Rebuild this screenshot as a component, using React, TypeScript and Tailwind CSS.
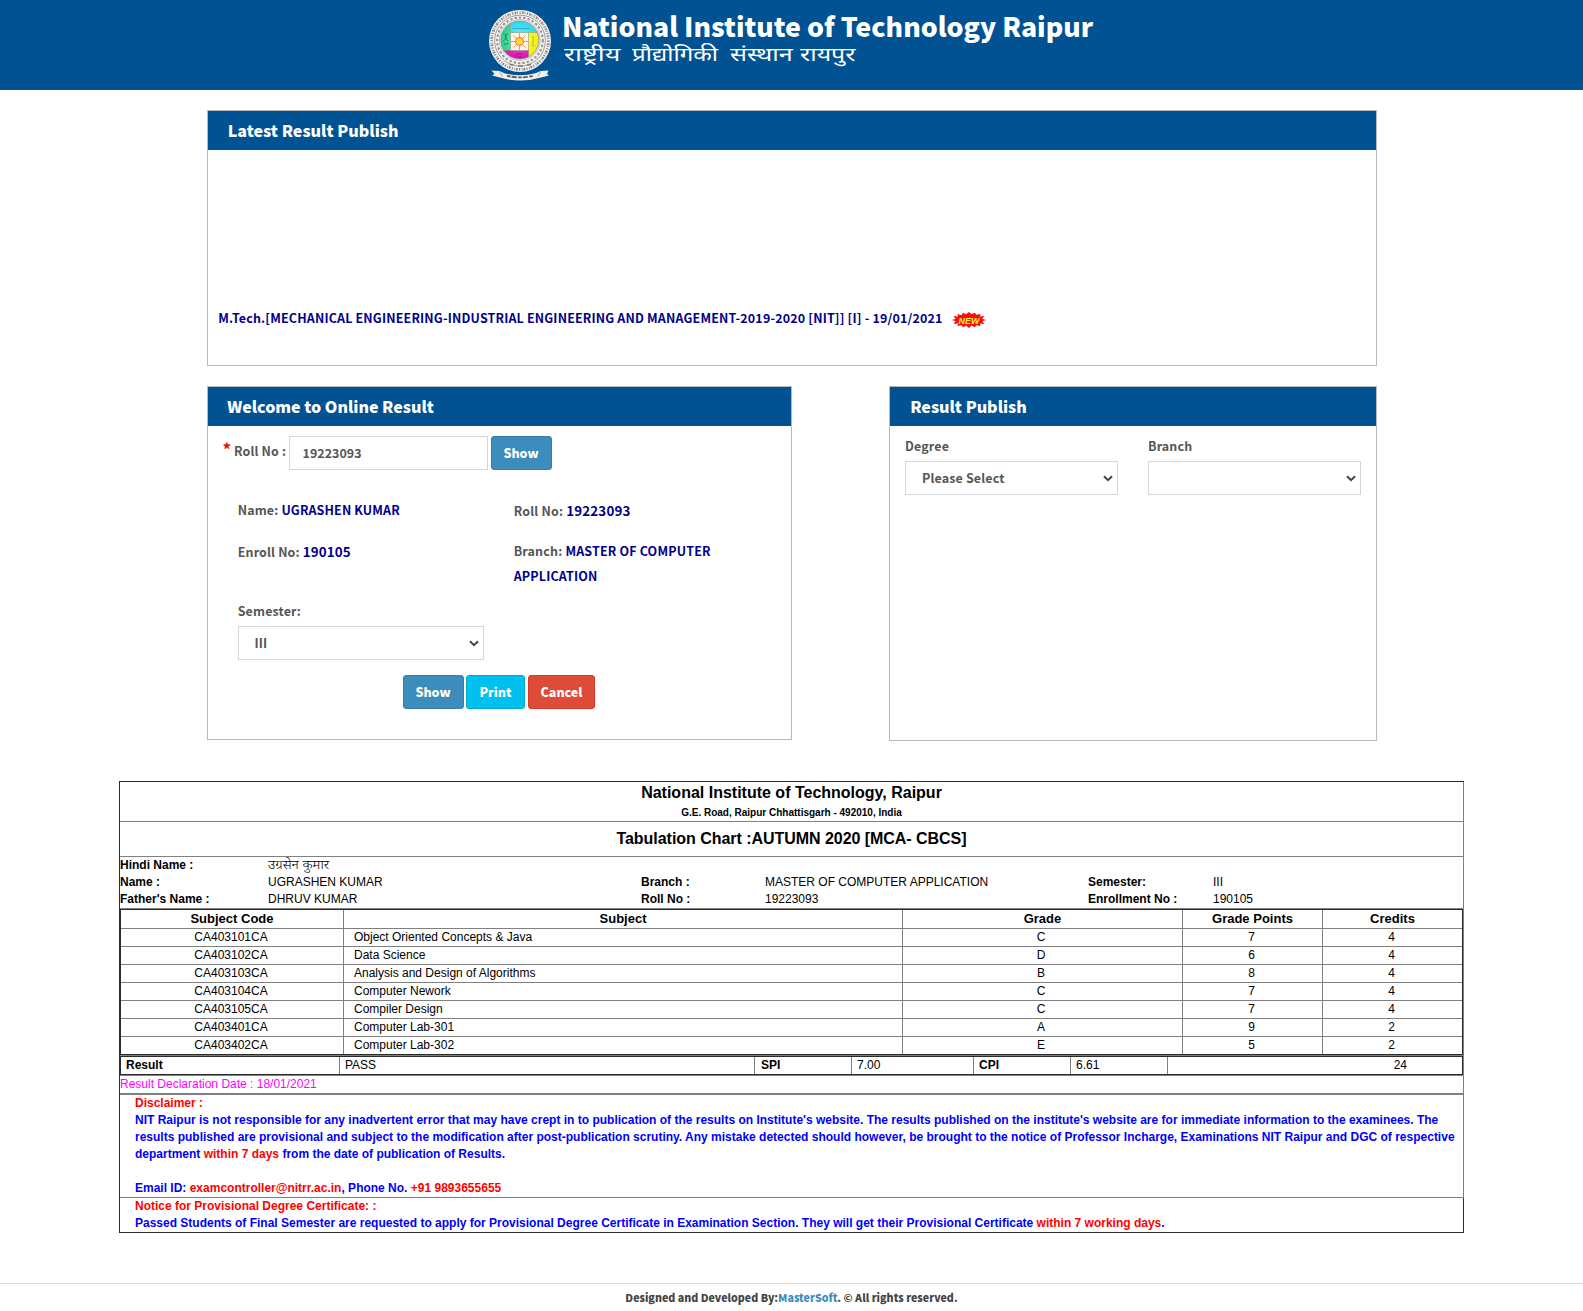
import type { ReactNode } from 'react';

const SOURCE = "font-['Noto_Sans_CJK_SC','Open_Sans',sans-serif]";
const ARIAL = "font-['Liberation_Sans',Arial,sans-serif]";

const SUBJECTS = [
  ['CA403101CA', 'Object Oriented Concepts & Java', 'C', '7', '4'],
  ['CA403102CA', 'Data Science', 'D', '6', '4'],
  ['CA403103CA', 'Analysis and Design of Algorithms', 'B', '8', '4'],
  ['CA403104CA', 'Computer Nework', 'C', '7', '4'],
  ['CA403105CA', 'Compiler Design', 'C', '7', '4'],
  ['CA403401CA', 'Computer Lab-301', 'A', '9', '2'],
  ['CA403402CA', 'Computer Lab-302', 'E', '5', '2'],
];

function Logo() {
  return (
    <svg width="63" height="71" viewBox="0 0 63 71" className="shrink-0">
      <defs>
        <clipPath id="disc"><circle cx="30.8" cy="30" r="19" /></clipPath>
        <radialGradient id="shine"><stop offset="0.1" stopColor="#fff" stopOpacity="0.35" /><stop offset="0.9" stopColor="#fff" stopOpacity="0" /></radialGradient>
      </defs>
      <circle cx="31" cy="31" r="31" fill="#f4f2f0" />
      <circle cx="31" cy="31" r="28.4" fill="none" stroke="#6d6a68" strokeWidth="2.6" strokeDasharray="1.1 1.3 1.7 0.9 0.8 1.6" opacity="0.8" />
      <circle cx="31" cy="30.6" r="25.4" fill="none" stroke="#8b8886" strokeWidth="0.8" />
      <circle cx="31" cy="30.4" r="22.8" fill="none" stroke="#7d7a78" strokeWidth="2" strokeDasharray="2.4 2" opacity="0.8" />
      <circle cx="30.8" cy="30" r="20.400" fill="#f8f6f4" stroke="#a09d9b" strokeWidth="0.6" />
      <g clipPath="url(#disc)">
        <rect x="10" y="10" width="42" height="42" fill="#fff6d8" />
        <rect x="10" y="10" width="11.500" height="31" fill="#2fd596" />
        <rect x="21.500" y="10" width="30" height="12.500" fill="#30dbf2" />
        <rect x="39.500" y="22.500" width="12" height="30" fill="#f5f012" />
        <rect x="10" y="40.500" width="29.500" height="12" fill="#e014b8" />
        <circle cx="30.800" cy="30" r="19" fill="url(#shine)" />
      </g>
      <circle cx="30.800" cy="30" r="19" fill="none" stroke="#6f7f7c" strokeWidth="0.7" />
      <path d="M21.500 14v26.500M39.500 22.500V46M21.500 22.500H48M14 40.500h25.500" stroke="#7b8a66" strokeWidth="0.5" />
      <path d="M30.500 22.800v17.400M22 31.500h17M24.400 25.400l12.200 12.200M36.600 25.400L24.400 37.600" stroke="#f58a8a" strokeWidth="1" />
      <circle cx="30.500" cy="31.500" r="4.600" fill="#ff7d62" />
      <circle cx="30.500" cy="31.500" r="3.300" fill="#ffde2b" />
      <path d="M14.500 23q5 4 0 8M19 23q-5 4 0 8M14.500 33q2.500 3 5 0" fill="none" stroke="#1d6e56" strokeWidth="0.8" />
      <path d="M24 18.500h17" stroke="#2a8ba0" strokeWidth="0.8" strokeDasharray="2 0.8" />
      <path d="M44 26v9M42.500 36h3.500" stroke="#b5b02a" strokeWidth="0.9" />
      <path d="M28 43.500h5l-1 3.500h-3z" fill="none" stroke="#85206f" strokeWidth="0.7" />
      <path d="M20.500 54.200l4 1M29 56h5M38 55.200l4-1" stroke="#7d7a78" strokeWidth="1.600" />
      <path d="M2.500 60.500l8 .5 5 2.200q15.500 4.300 31 0l5-2.200 8-.5-1.500 3.500 2 1.500-8 2q-20.500 6-41 0l-8-2 2.500-1.500z" fill="#f2f0ee" />
      <path d="M18 65.800q13 3.200 26 0" fill="none" stroke="#5f5c5a" strokeWidth="1.900" strokeDasharray="3.600 1.100 5 1.500" />
      <path d="M10.500 61.500l3 5M51.500 61.500l-2.500 5" stroke="#8b8886" strokeWidth="0.7" />
    </svg>
  );
}

function NewBadge() {
  return (
    <svg width="34" height="16" viewBox="0 0 34 16" className="shrink-0">
      <path d="M0 8l3.500-1.200L1.500 4l4.500.4L5.500 2l4 1.300L11 .8l3 1.400L17 0l2.500 2L23 .8l1.200 2L28.500 2 28 4.400l4.500-.3-2.200 2.700L34 8l-3.700 1.200 2.200 2.700-4.500-.3.500 2.400-4.300-.8L23 15.200l-3.500-1.700L17 16l-3-2.200-3 1.400-1.500-2-4 .8.500-2.400-4.500.4 2-2.800z" fill="#fa0f0a" />
      <text x="17" y="11.500" textAnchor="middle" textLength="21" lengthAdjust="spacingAndGlyphs" fontSize="9.500" fontWeight="700" fontStyle="italic" fill="#fff23a" fontFamily="Liberation Sans">NEW</text>
    </svg>
  );
}

function Panel({ title, className, titleClass, children }: { title: string; className: string; titleClass: string; children?: ReactNode }) {
  return (
    <section className={`border border-[#b9b9b9] bg-white ${className}`}>
      <h2 className={`h-[39px] bg-[#005293] text-[16.02px] leading-[39px] font-black text-white ${titleClass}`}>{title}</h2>
      {children}
    </section>
  );
}

function Select({ value, className, textClass }: { value: string; className: string; textClass: string }) {
  return (
    <div className={`flex h-[34px] items-center justify-between border border-[#d2d6de] bg-white pr-[4px] ${className}`}>
      <span className={`leading-[32px] ${textClass}`}>{value}</span>
      <svg width="10" height="7" viewBox="0 0 10 7"><path d="M1 1.200l4 4 4-4" fill="none" stroke="#444" strokeWidth="2" /></svg>
    </div>
  );
}

function Button({ label, className }: { label: string; className: string }) {
  return <button className={`h-[34px] rounded-[3px] border text-center leading-[32px] font-black tracking-normal text-white ${className}`}>{label}</button>;
}

function Value({ children, big }: { children: ReactNode; big?: boolean }) {
  return <span className={big ? 'text-[13.35px] text-[#00008b]' : 'text-[#00008b]'}>{children}</span>;
}

function HindiWord({ text, className, scale }: { text: string; className: string; scale: string }) {
  return <span className={`block ${className}`}><span className={`block w-max origin-left ${scale}`}>{text}</span></span>;
}

function InfoRow({ cells }: { cells: string[] }) {
  return (
    <div className="grid h-[17px] grid-cols-[148px_373px_124px_323px_125px_1fr] leading-[17px] whitespace-nowrap">
      {cells.map((c, i) => <span key={i} className={i % 2 === 0 ? 'font-bold' : ''}>{c}</span>)}
    </div>
  );
}

export default function App() {
  return (
    <div className={`h-[1311px] overflow-hidden bg-white ${SOURCE}`}>
      <header className="flex h-[90px] bg-[#005293] pt-[10px] pl-[489px] text-white">
        <Logo />
        <div className="pt-px pl-[10px]">
          <h1 className="text-[26.7px] leading-[30px] font-black whitespace-nowrap">National Institute of Technology Raipur</h1>
          <div className="-mt-px flex pl-[1.500px] font-['Noto_Sans',sans-serif] text-[19px] leading-[28px] whitespace-nowrap">
            <HindiWord text="राष्ट्रीय" className="w-[68px]" scale="scale-x-[1.42]" />
            <HindiWord text="प्रौद्योगिकी" className="w-[98px]" scale="scale-x-[1.27]" />
            <HindiWord text="संस्थान" className="w-[70px]" scale="scale-x-[1.32]" />
            <HindiWord text="रायपुर" className="w-[55px]" scale="scale-x-[1.31]" />
          </div>
        </div>
      </header>

      <main className="mx-auto w-[1170px] pt-[20px] text-[12.46px] font-bold tracking-[0.15px] text-[#555]">
        <Panel title="Latest Result Publish" className="h-[256px]" titleClass="pl-[20.200px] tracking-[0.02px]">
          <div className="mt-[158px] flex pl-[10.800px] leading-[21px]">
            <span className="tracking-[0.17px] whitespace-nowrap text-[#00008b]">M.Tech.[MECHANICAL ENGINEERING-INDUSTRIAL ENGINEERING AND MANAGEMENT-2019-2020 [NIT]] [I] - 19/01/2021</span>
            <span className="mt-[4px] ml-[9.500px]"><NewBadge /></span>
          </div>
        </Panel>

        <div className="mt-[20px] flex items-start justify-between">
          <Panel title="Welcome to Online Result" className="h-[354px] w-[585px]" titleClass="pl-[19.800px] tracking-[-0.015px]">
            <div className="mt-[10px] flex pl-[15px]">
              <span className="w-[11.500px] text-[17px] leading-[26px] font-bold tracking-normal text-[#f00]">*</span>
              <label className="mt-[5px] w-[55px] leading-[20px] whitespace-nowrap">Roll No :</label>
              <input readOnly value="19223093" className="h-[34px] w-[199px] border border-[#d2d6de] pl-[12.500px] leading-[32px] tracking-[0.03px] outline-none" />
              <Button label="Show" className="ml-[3px] w-[61px] border-[#367fa9] bg-[#3c8dbc] pr-px" />
            </div>
            <div className="mt-[28px] grid grid-cols-[276px_220px] pl-[30.200px] leading-[25px]">
              <div>
                <p>Name: <Value>UGRASHEN KUMAR</Value></p>
                <p className="mt-[16px]">Enroll No: <Value big>190105</Value></p>
              </div>
              <div className="tracking-[0.18px]">
                <p>Roll No: <Value big>19223093</Value></p>
                <p className="mt-[15px]">Branch: <Value>MASTER OF COMPUTER<br />APPLICATION</Value></p>
              </div>
            </div>
            <div className="mt-[12px] pl-[29.500px]">
              <label className="block pl-[0.700px] leading-[20px]">Semester:</label>
              <Select value="III" className="mt-[5px] ml-[1px] w-[246px]" textClass="pl-[15.500px]" />
            </div>
            <div className="mt-[15px] flex pl-[195.500px]">
              <Button label="Show" className="w-[61px] border-[#367fa9] bg-[#3c8dbc] pr-px" />
              <Button label="Print" className="ml-[2px] w-[59px] border-[#00acd6] bg-[#00c0ef]" />
              <Button label="Cancel" className="ml-[3px] w-[67px] border-[#d73925] bg-[#dd4b39]" />
            </div>
          </Panel>

          <Panel title="Result Publish" className="h-[355px] w-[487.500px]" titleClass="pl-[20.200px] tracking-normal">
            <div className="flex gap-[30px] pt-[10px] pl-[15px]">
              <div>
                <label className="block leading-[20px]">Degree</label>
                <Select value="Please Select" className="mt-[5px] w-[213px]" textClass="pl-[16px]" />
              </div>
              <div>
                <label className="block leading-[20px]">Branch</label>
                <Select value="" className="mt-[5px] w-[213px]" textClass="" />
              </div>
            </div>
          </Panel>
        </div>
      </main>

      <section className={`mt-[40px] ml-[119px] w-[1345px] border-t border-b border-l border-[#2b2b2b] text-[12px] leading-[17px] text-black ${ARIAL}`}>
        <div className="border-r border-[#808080]">
          <div className="h-[40px] border-b border-[#808080] text-center font-bold">
            <h3 className="text-[16px] leading-[21px]">National Institute of Technology, Raipur</h3>
            <p className="pt-[2px] text-[10px] leading-[16px]">G.E. Road, Raipur Chhattisgarh - 492010, India</p>
          </div>
          <h3 className="h-[35px] border-b border-[#808080] text-center text-[16px] leading-[33px] font-bold tracking-[-0.04px]">Tabulation Chart :AUTUMN 2020 [MCA- CBCS]</h3>
          <div className="border-b border-[#808080]">
            <div className="grid h-[17px] grid-cols-[148px_1fr] leading-[17px]">
              <b>Hindi Name :</b>
              <span className="w-max origin-left scale-x-[1.16] font-['Noto_Sans',sans-serif] leading-[16px] font-light">उग्रसेन कुमार</span>
            </div>
            <InfoRow cells={['Name :', 'UGRASHEN KUMAR', 'Branch :', 'MASTER OF COMPUTER APPLICATION', 'Semester:', 'III']} />
            <InfoRow cells={["Father's Name :", 'DHRUV KUMAR', 'Roll No :', '19223093', 'Enrollment No :', '190105']} />
          </div>

          <div className="border border-[#2b2b2b]">
            <div className="grid h-[18px] grid-cols-[223px_559px_280px_140px_139px] text-center text-[13px] leading-[18px] font-bold">
              {['Subject Code', 'Subject', 'Grade', 'Grade Points', 'Credits'].map((h, i) => (
                <div key={h} className={i < 4 ? 'border-r border-[#808080]' : ''}>{h}</div>
              ))}
            </div>
            {SUBJECTS.map((row) => (
              <div key={row[0]} className="grid h-[18px] grid-cols-[223px_559px_280px_140px_139px] border-t border-[#808080] text-center">
                {row.map((c, i) => (
                  <div key={i} className={`${i < 4 ? 'border-r border-[#808080]' : ''} ${i === 1 ? 'pl-[10px] text-left' : i === 2 ? 'pr-[3px]' : 'pr-[2px]'}`}>{c}</div>
                ))}
              </div>
            ))}
          </div>
          <div className="h-px bg-[#808080]" />
          <div className="grid h-[19px] grid-cols-[219px_415px_97px_122px_97px_97px_294px] border border-[#2b2b2b]">
            <div className="border-r border-[#808080] pl-[5px] font-bold">Result</div>
            <div className="border-r border-[#808080] pl-[5px]">PASS</div>
            <div className="border-r border-[#808080] pl-[6px] font-bold">SPI</div>
            <div className="border-r border-[#808080] pl-[5px]">7.00</div>
            <div className="border-r border-[#808080] pl-[5px] font-bold">CPI</div>
            <div className="border-r border-[#808080] pl-[5px]">6.61</div>
            <div className="pr-[55px] text-right">24</div>
          </div>
          <div className="h-px bg-[#808080]" />
          <p className="h-[19px] border-b-2 border-[#808080] text-[#f0f]">Result Declaration Date : 18/01/2021</p>
          <div className="h-[103px] border-b border-[#808080] pl-[15px] font-bold whitespace-nowrap text-[#00f]">
            <p className="text-[#f00]">Disclaimer :</p>
            <p>
              NIT Raipur is not responsible for any inadvertent error that may have crept in to publication of the results on Institute's website. The results published on the institute's website are for immediate information to the examinees. The<br />
              results published are provisional and subject to the modification after post-publication scrutiny. Any mistake detected should however, be brought to the notice of Professor Incharge, Examinations NIT Raipur and DGC of respective<br />
              department <span className="text-[#f00]">within 7 days</span> from the date of publication of Results.
            </p>
            <p className="mt-[17px]">Email ID: <span className="text-[#f00]">examcontroller@nitrr.ac.in</span>, Phone No. <span className="text-[#f00]">+91 9893655655</span></p>
          </div>
        </div>
        <div className="h-[34px] border-r border-[#2b2b2b] pl-[15px] font-bold text-[#00f]">
          <p className="text-[#f00]">Notice for Provisional Degree Certificate: :</p>
          <p>Passed Students of Final Semester are requested to apply for Provisional Degree Certificate in Examination Section. They will get their Provisional Certificate <span className="text-[#f00]">within 7 working days</span>.</p>
        </div>
      </section>

      <footer className="mt-[50px] border-t border-[#d2d6de] pt-[4px] text-center text-[10.68px] leading-[20px] font-black text-[#444]">
        Designed and Developed By:<span className="text-[#3c8dbc]">MasterSoft</span>. © All rights reserved.
      </footer>
    </div>
  );
}
